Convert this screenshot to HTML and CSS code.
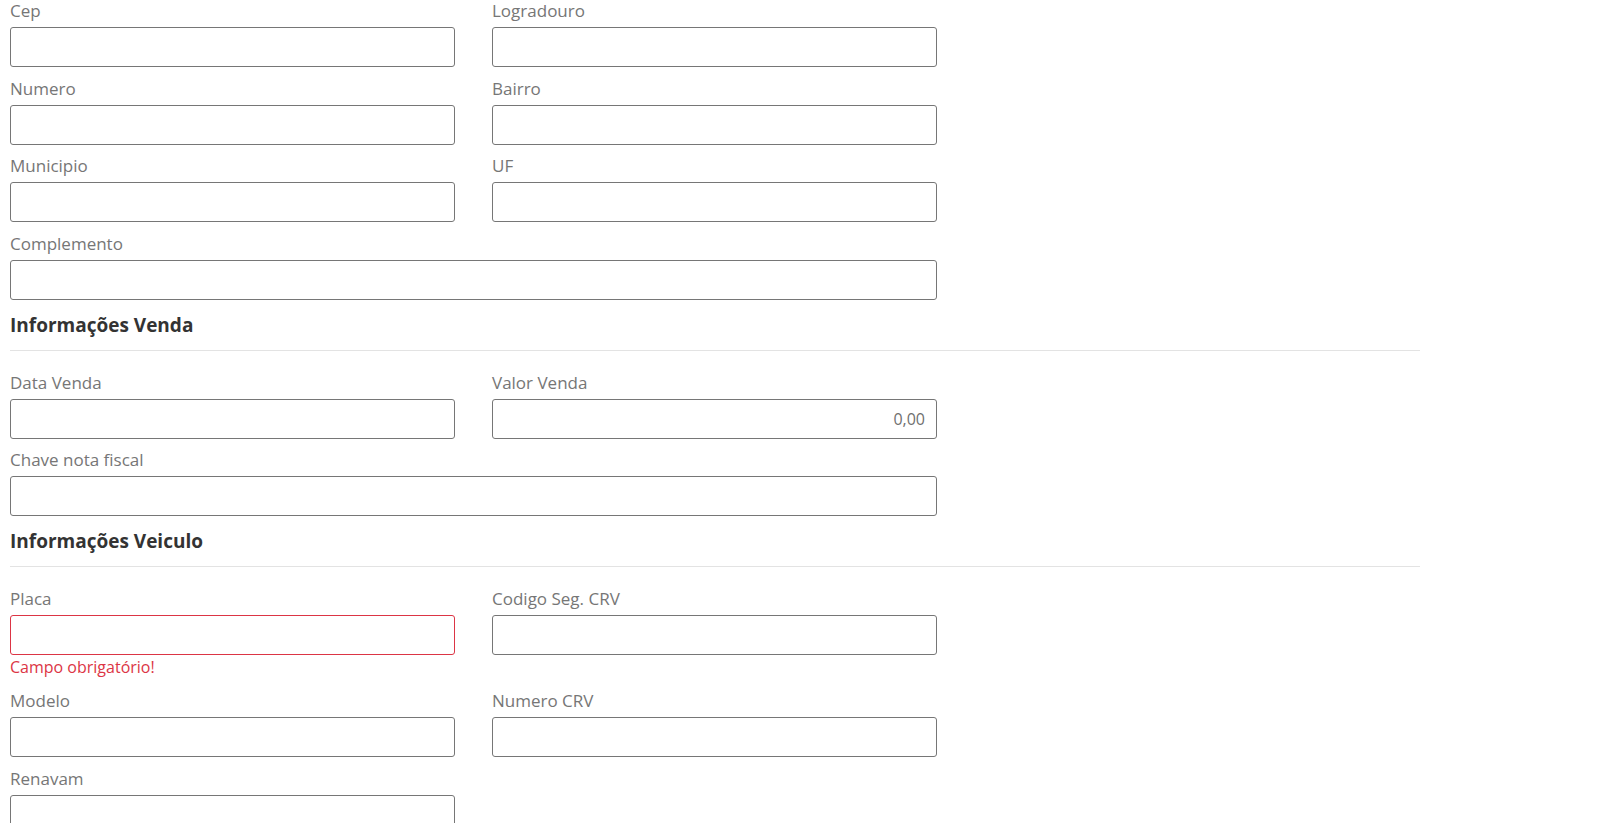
FILE: index.html
```html
<!DOCTYPE html>
<html lang="pt-BR">
<head>
<meta charset="utf-8">
<title>Formulário</title>
<link rel="stylesheet" href="styles.css">
</head>
<body>
<form class="form">
  <div class="row">
    <div class="field"><label class="label">Cep</label><div class="input"></div></div>
    <div class="field"><label class="label">Logradouro</label><div class="input"></div></div>
  </div>
  <div class="row">
    <div class="field"><label class="label">Numero</label><div class="input"></div></div>
    <div class="field"><label class="label">Bairro</label><div class="input"></div></div>
  </div>
  <div class="row">
    <div class="field"><label class="label">Municipio</label><div class="input"></div></div>
    <div class="field"><label class="label">UF</label><div class="input"></div></div>
  </div>
  <div class="row">
    <div class="field full"><label class="label">Complemento</label><div class="input"></div></div>
  </div>

  <div class="section">
    <h3 class="section-title">Informações Venda</h3>
    <div class="divider"></div>
  </div>
  <div class="row">
    <div class="field"><label class="label">Data Venda</label><div class="input"></div></div>
    <div class="field"><label class="label">Valor Venda</label><div class="input right">0,00</div></div>
  </div>
  <div class="row">
    <div class="field full"><label class="label">Chave nota fiscal</label><div class="input"></div></div>
  </div>

  <div class="section">
    <h3 class="section-title">Informações Veiculo</h3>
    <div class="divider"></div>
  </div>
  <div class="row">
    <div class="field"><label class="label">Placa</label><div class="input invalid"></div><div class="error">Campo obrigatório!</div></div>
    <div class="field"><label class="label">Codigo Seg. CRV</label><div class="input"></div></div>
  </div>
  <div class="row">
    <div class="field"><label class="label">Modelo</label><div class="input"></div></div>
    <div class="field"><label class="label">Numero CRV</label><div class="input"></div></div>
  </div>
  <div class="row">
    <div class="field"><label class="label">Renavam</label><div class="input"></div></div>
  </div>
</form>
</body>
</html>
```
FILE: styles.css
```css
html, body {
  margin: 0;
  padding: 0;
  background: #ffffff;
}
body {
  font-family: "Open Sans", "Liberation Sans", sans-serif;
  color: #757575;
}
.form {
  padding: 0 0 40px 10px;
}
.row {
  display: grid;
  grid-template-columns: 445px 445px;
  column-gap: 37px;
  align-items: start;
  margin-bottom: 10.67px;
}
.field {
  display: flex;
  flex-direction: column;
}
.field.full {
  grid-column: 1 / span 2;
}
.label {
  font-size: 17px;
  line-height: 21px;
  margin-bottom: 6px;
  color: #767676;
}
.input {
  box-sizing: border-box;
  height: 40px;
  border: 1px solid #767676;
  border-radius: 3px;
  background: #fff;
  font-size: 16px;
  line-height: 38px;
  padding: 0 11px;
  color: #6f6f6f;
}
.input.right {
  text-align: right;
}
.input.invalid {
  border-color: #dc3545;
}
.error {
  margin-top: 2px;
  margin-bottom: 2.5px;
  font-size: 16px;
  line-height: 20px;
  color: #dc3545;
}
.section {
  padding-top: 3px;
}
.section-title {
  margin: 0;
  font-size: 19px;
  line-height: 23px;
  font-weight: 700;
  color: #333333;
}
.divider {
  width: 1410px;
  height: 1px;
  background: #e3e3e3;
  margin-top: 13px;
  margin-bottom: 21px;
}
```
